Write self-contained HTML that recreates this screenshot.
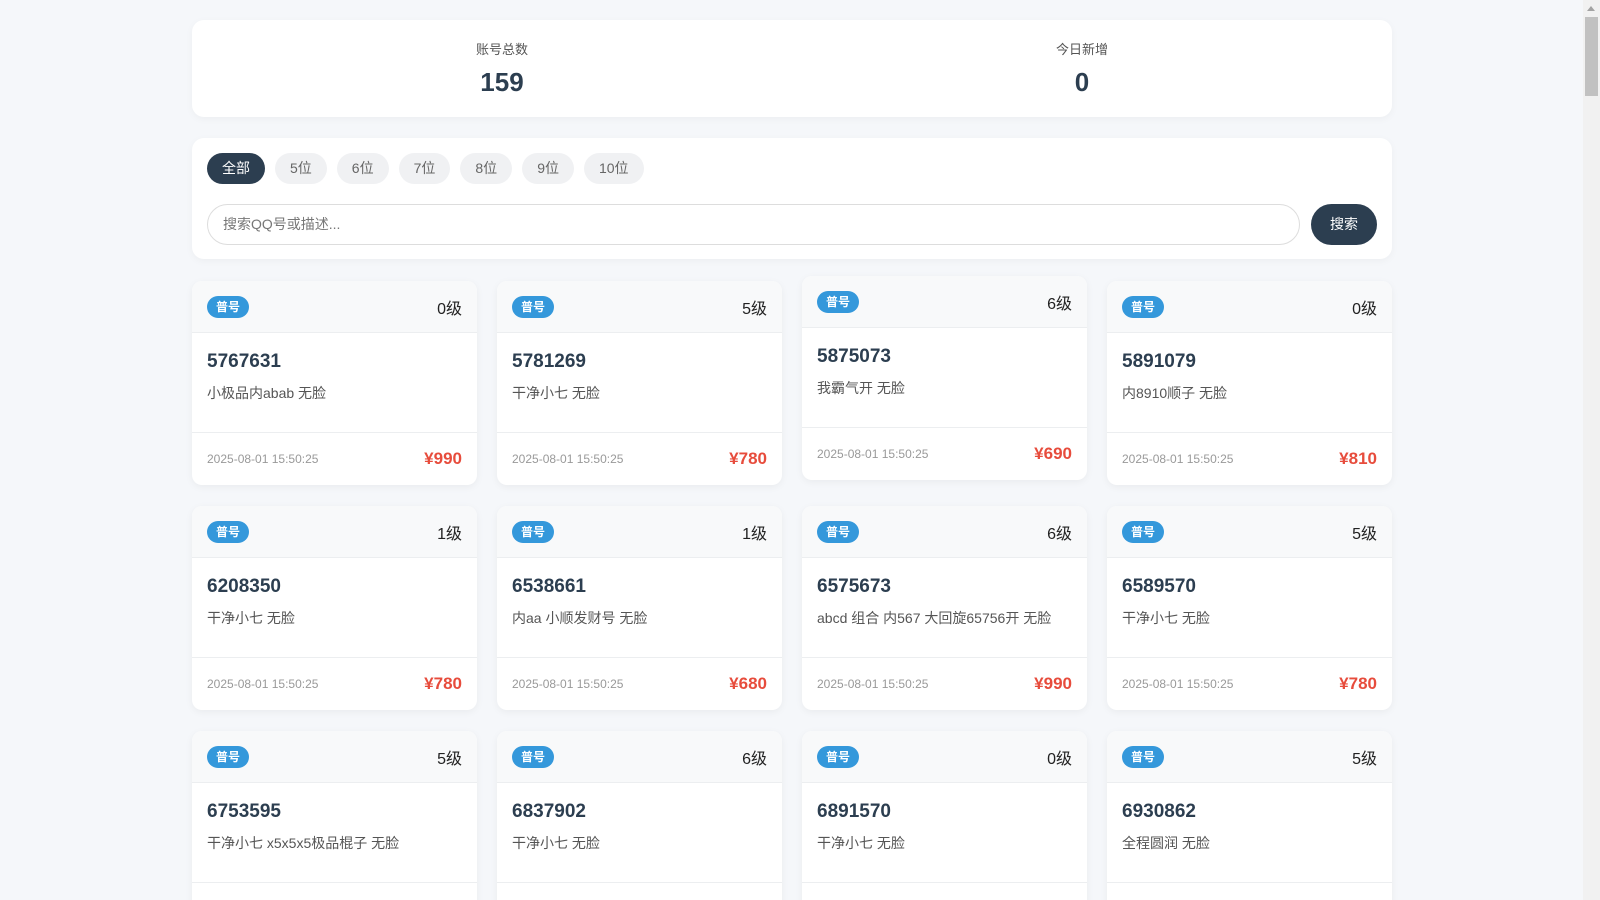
<!DOCTYPE html>
<html><head><meta charset="utf-8"><style>
*{box-sizing:border-box;margin:0;padding:0}
html,body{width:1600px;height:900px;overflow:hidden}
body{background:#f5f7fa;font-family:"Liberation Sans","Noto Sans CJK SC",sans-serif;position:relative}
.sb{position:absolute;right:0;top:0;width:17px;height:900px;background:#f1f1f1}
.sb .th{position:absolute;left:2px;right:2px;top:17px;height:79px;background:#c1c1c1}
.sb .ar{position:absolute;left:4px;top:6px;width:0;height:0;border-left:4px solid transparent;border-right:4px solid transparent;border-bottom:5px solid #a3a3a3}
.wrap{position:absolute;left:192px;width:1200px;top:20px}
.stats{background:#fff;border-radius:12px;height:97px;box-shadow:0 2px 8px rgba(0,0,0,.04);display:flex;padding:0 20px}
.stat{flex:1;text-align:center;padding-top:22px}
.stat .l{font-size:13px;color:#555;line-height:16px}
.stat .n{font-size:26px;font-weight:bold;color:#2c3e50;margin-top:9px;line-height:30px}
.filt{background:#fff;border-radius:12px;height:121px;margin-top:21px;padding:15px;box-shadow:0 2px 8px rgba(0,0,0,.04)}
.pills{display:flex;gap:10px}
.pill{height:31px;line-height:31px;padding:0 15px;border-radius:16px;background:#f0f1f3;color:#666;font-size:14px}
.pill.on{background:#2c3e50;color:#fff}
.srch{display:flex;margin-top:20px;gap:11px}
.inp{flex:1;height:41px;border:1px solid #ddd;border-radius:21px;font-size:14px;color:#777;line-height:39px;padding-left:15px}
.btn{width:66px;height:41px;border-radius:21px;background:#2c3e50;color:#fff;font-size:14px;text-align:center;line-height:41px}
.grid{display:grid;grid-template-columns:repeat(4,285px);column-gap:20px;row-gap:21px;margin-top:22px}
.card{background:#fff;border-radius:10px;height:204px;box-shadow:0 2px 8px rgba(0,0,0,.05);overflow:hidden}
.card.up{transform:translateY(-5px)}
.hd{height:52px;background:#f8f9fa;border-bottom:1px solid #eceef0;display:flex;align-items:center;justify-content:space-between;padding:0 15px}
.bd{display:inline-block;background:#3498db;color:#fff;font-size:12px;font-weight:bold;height:22px;line-height:22px;padding:0 9px;border-radius:11px}
.lv{font-size:16px;color:#222}
.bo{height:100px;border-bottom:1px solid #eceef0;padding:17px 15px 0}
.num{font-size:19px;font-weight:bold;color:#2c3e50;line-height:24px}
.ds{font-size:14px;color:#555;margin-top:10px;line-height:18px}
.ft{height:52px;display:flex;align-items:center;justify-content:space-between;padding:0 15px}
.dt{font-size:12px;color:#999}
.pr{font-size:17px;font-weight:bold;color:#e74c3c}
</style></head><body>
<div class="wrap">
<div class="stats"><div class="stat"><div class="l">账号总数</div><div class="n">159</div></div><div class="stat"><div class="l">今日新增</div><div class="n">0</div></div></div>
<div class="filt"><div class="pills"><div class="pill on">全部</div><div class="pill">5位</div><div class="pill">6位</div><div class="pill">7位</div><div class="pill">8位</div><div class="pill">9位</div><div class="pill">10位</div></div>
<div class="srch"><div class="inp">搜索QQ号或描述...</div><div class="btn">搜索</div></div></div>
<div class="grid">
<div class="card"><div class="hd"><span class="bd">普号</span><span class="lv">0级</span></div><div class="bo"><div class="num">5767631</div><div class="ds">小极品内abab 无脸</div></div><div class="ft"><span class="dt">2025-08-01 15:50:25</span><span class="pr">¥990</span></div></div>
<div class="card"><div class="hd"><span class="bd">普号</span><span class="lv">5级</span></div><div class="bo"><div class="num">5781269</div><div class="ds">干净小七 无脸</div></div><div class="ft"><span class="dt">2025-08-01 15:50:25</span><span class="pr">¥780</span></div></div>
<div class="card up"><div class="hd"><span class="bd">普号</span><span class="lv">6级</span></div><div class="bo"><div class="num">5875073</div><div class="ds">我霸气开 无脸</div></div><div class="ft"><span class="dt">2025-08-01 15:50:25</span><span class="pr">¥690</span></div></div>
<div class="card"><div class="hd"><span class="bd">普号</span><span class="lv">0级</span></div><div class="bo"><div class="num">5891079</div><div class="ds">内8910顺子 无脸</div></div><div class="ft"><span class="dt">2025-08-01 15:50:25</span><span class="pr">¥810</span></div></div>
<div class="card"><div class="hd"><span class="bd">普号</span><span class="lv">1级</span></div><div class="bo"><div class="num">6208350</div><div class="ds">干净小七 无脸</div></div><div class="ft"><span class="dt">2025-08-01 15:50:25</span><span class="pr">¥780</span></div></div>
<div class="card"><div class="hd"><span class="bd">普号</span><span class="lv">1级</span></div><div class="bo"><div class="num">6538661</div><div class="ds">内aa 小顺发财号 无脸</div></div><div class="ft"><span class="dt">2025-08-01 15:50:25</span><span class="pr">¥680</span></div></div>
<div class="card"><div class="hd"><span class="bd">普号</span><span class="lv">6级</span></div><div class="bo"><div class="num">6575673</div><div class="ds">abcd 组合 内567 大回旋65756开 无脸</div></div><div class="ft"><span class="dt">2025-08-01 15:50:25</span><span class="pr">¥990</span></div></div>
<div class="card"><div class="hd"><span class="bd">普号</span><span class="lv">5级</span></div><div class="bo"><div class="num">6589570</div><div class="ds">干净小七 无脸</div></div><div class="ft"><span class="dt">2025-08-01 15:50:25</span><span class="pr">¥780</span></div></div>
<div class="card"><div class="hd"><span class="bd">普号</span><span class="lv">5级</span></div><div class="bo"><div class="num">6753595</div><div class="ds">干净小七 x5x5x5极品棍子 无脸</div></div><div class="ft"><span class="dt">2025-08-01 15:50:25</span><span class="pr">¥780</span></div></div>
<div class="card"><div class="hd"><span class="bd">普号</span><span class="lv">6级</span></div><div class="bo"><div class="num">6837902</div><div class="ds">干净小七 无脸</div></div><div class="ft"><span class="dt">2025-08-01 15:50:25</span><span class="pr">¥780</span></div></div>
<div class="card"><div class="hd"><span class="bd">普号</span><span class="lv">0级</span></div><div class="bo"><div class="num">6891570</div><div class="ds">干净小七 无脸</div></div><div class="ft"><span class="dt">2025-08-01 15:50:25</span><span class="pr">¥780</span></div></div>
<div class="card"><div class="hd"><span class="bd">普号</span><span class="lv">5级</span></div><div class="bo"><div class="num">6930862</div><div class="ds">全程圆润 无脸</div></div><div class="ft"><span class="dt">2025-08-01 15:50:25</span><span class="pr">¥780</span></div></div>
</div></div>
<div class="sb"><div class="ar"></div><div class="th"></div></div>
</body></html>
